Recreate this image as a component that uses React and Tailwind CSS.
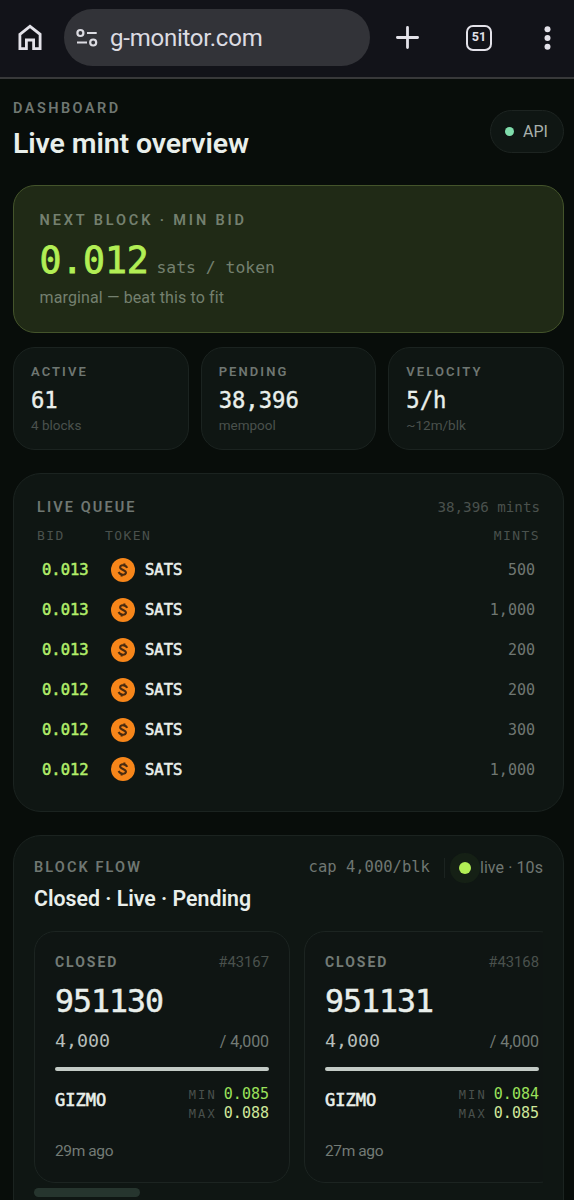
const queue = [
  { bid: "0.013", token: "SATS", mints: "500" },
  { bid: "0.013", token: "SATS", mints: "1,000" },
  { bid: "0.013", token: "SATS", mints: "200" },
  { bid: "0.012", token: "SATS", mints: "200" },
  { bid: "0.012", token: "SATS", mints: "300" },
  { bid: "0.012", token: "SATS", mints: "1,000" },
];

const stats = [
  { label: "ACTIVE", value: "61", note: "4 blocks" },
  { label: "PENDING", value: "38,396", note: "mempool" },
  { label: "VELOCITY", value: "5/h", note: "~12m/blk" },
];

const blocks = [
  { id: "#43167", height: "951130", min: "0.085", max: "0.088", ago: "29m ago" },
  { id: "#43168", height: "951131", min: "0.084", max: "0.085", ago: "27m ago" },
];

function SatsIcon() {
  return (
    <svg className="w-6 h-6 shrink-0" viewBox="0 0 24 24" fill="none">
      <circle cx="12" cy="12" r="12" fill="#f7861a" />
      <g transform="rotate(14 12 12)" stroke="#4a2b10" strokeWidth="2.1">
        <path d="M15.5 8.9C14.8 7.8 13.5 7.4 12 7.4c-2.1 0-3.5.8-3.5 2.3 0 3.1 7.1 1.5 7.1 4.6 0 1.5-1.5 2.3-3.6 2.3-1.7 0-3-.5-3.8-1.6" />
        <path d="M12 5.2v2.4M12 16.4v2.4" />
      </g>
    </svg>
  );
}

function BrowserBar() {
  return (
    <div className="h-[79px] border-b-2 border-[#38393a] bg-[#121319] flex items-start pt-[9px]">
      <div className="w-[64px] h-[57px] pl-[18px] flex items-center">
        <svg
          className="w-6 h-[27px]"
          viewBox="0 0 24 27"
          fill="none"
          stroke="#e3e2e9"
          strokeWidth="2.8"
        >
          <path d="M1.9 10.3 12 2.4l10.1 7.9v14.3h-6.5V16H8.4v8.6H1.9z" />
        </svg>
      </div>
      <div className="w-[306px] h-[57px] rounded-full bg-[#323338] flex items-center pl-[12px]">
        <svg
          className="w-[22px] h-[20px]"
          viewBox="0 0 22 20"
          fill="none"
          stroke="#dcdce2"
          strokeWidth="2.2"
        >
          <circle cx="4.4" cy="5" r="3" />
          <path d="M11 5h9.7M1 14.5h10" />
          <circle cx="17.2" cy="14.5" r="3" />
        </svg>
        <span className="ml-[12px] font-[Roboto] text-[24px] leading-none tracking-[-0.01em] text-[#dcdce2]">
          g-monitor.com
        </span>
      </div>
      <div className="h-[57px] flex-1 flex items-center justify-between pl-[26px] pr-[23px]">
        <svg
          className="w-[23px] h-[23px]"
          viewBox="0 0 23 23"
          stroke="#e3e2e9"
          strokeWidth="2.8"
          strokeLinecap="round"
        >
          <path d="M11.5 1.4v20.2M1.4 11.5h20.2" />
        </svg>
        <div className="w-[26px] h-[26px] rounded-[7px] border-[2.6px] border-[#e3e2e9] flex items-center justify-center font-[Roboto] font-bold text-[12.5px] leading-none text-[#e3e2e9]">
          51
        </div>
        <svg className="w-[7px] h-6 ml-[5px]" viewBox="0 0 7 24" fill="#e3e2e9">
          <circle cx="3.5" cy="3.2" r="3" />
          <circle cx="3.5" cy="12" r="3" />
          <circle cx="3.5" cy="20.8" r="3" />
        </svg>
      </div>
    </div>
  );
}

function BlockCard({ block }) {
  return (
    <div className="w-[256px] h-[252px] shrink-0 rounded-[21px] border border-[#1c2421] bg-[#0f1513] px-[20px] pt-[19px]">
      <div className="h-[22px] flex items-center justify-between">
        <span className="font-bold text-[14px] tracking-[0.14em] text-[#737b76]">CLOSED</span>
        <span className="text-[14.8px] text-[#4a514d]">{block.id}</span>
      </div>
      <div className="mt-px h-[56px] flex items-center font-['DejaVu_Sans_Mono',monospace] text-[31.5px] tracking-[-0.03em] text-[#e9efeb] [-webkit-text-stroke:0.5px_#e9efeb]">
        {block.height}
      </div>
      <div className="-mt-px h-[24px] flex items-center justify-between">
        <span className="font-['DejaVu_Sans_Mono',monospace] text-[18.3px] text-[#b6bdb9]">
          4,000
        </span>
        <span className="mt-[2px] text-[16px] tracking-[-0.005em] text-[#737b76]">/ 4,000</span>
      </div>
      <div className="mt-[14px] h-[4px] rounded-full bg-[#c3cbc6]"></div>
      <div className="mt-[14px] h-[38px] flex items-center justify-between">
        <span className="-mt-[6px] font-['DejaVu_Sans_Mono',monospace] text-[17px] text-[#e9efeb] [-webkit-text-stroke:0.6px_#e9efeb]">
          GIZMO
        </span>
        <div className="font-['DejaVu_Sans_Mono',monospace] text-[15px]">
          <div className="h-[19px] flex items-center justify-end">
            <span className="text-[12px] tracking-[0.18em] text-[#4a514d] mr-[7px]">MIN</span>
            <span className="text-[#9be15a]">{block.min}</span>
          </div>
          <div className="h-[19px] flex items-center justify-end">
            <span className="text-[12px] tracking-[0.18em] text-[#4a514d] mr-[7px]">MAX</span>
            <span className="text-[#cfe79a]">{block.max}</span>
          </div>
        </div>
      </div>
      <div className="mt-[17px] h-[24px] flex items-center text-[15.5px] tracking-[-0.025em] text-[#737b76]">
        {block.ago}
      </div>
    </div>
  );
}

export default function App() {
  return (
    <div className="w-full h-[1200px] overflow-hidden bg-[#080d0a] font-[Roboto,sans-serif] whitespace-nowrap">
      <BrowserBar />

      <main className="pl-[13px] pr-[10px]">
        <header className="h-[106px] flex justify-between">
          <div className="pt-[20px]">
            <div className="h-[20px] flex items-center font-semibold text-[14.5px] tracking-[0.17em] text-[#6f7772]">
              DASHBOARD
            </div>
            <h1 className="h-[50px] flex items-center font-semibold text-[28.5px] tracking-[-0.004em] text-[#e9efeb]">
              Live mint overview
            </h1>
          </div>
          <div className="mt-[31px] w-[74px] h-[43px] rounded-full border border-[#1d2421] bg-[#0f1613] flex items-center pl-[14px] text-[16px] text-[#a9b1ac]">
            <span className="w-[9px] h-[9px] rounded-full bg-[#7fdcab] mr-[9px]"></span>
            API
          </div>
        </header>

        {/* Next block */}
        <section className="h-[148px] rounded-[22px] border border-[#44542b] bg-[#202a16] pl-[25.5px] pt-[23px]">
          <div className="h-[24px] flex items-center font-semibold text-[14.5px] tracking-[0.198em] text-[#74806f]">
            NEXT BLOCK · MIN BID
          </div>
          <div className="h-[54px] flex items-center font-['DejaVu_Sans_Mono',monospace]">
            <span className="mt-[2px] text-[36.5px] tracking-[-0.005em] text-[#b2ee55] [-webkit-text-stroke:0.8px_#b2ee55]">
              0.012
            </span>
            <span className="ml-[8px] mt-[16px] text-[16.4px] text-[#74806f]">sats / token</span>
          </div>
          <div className="-mt-[1px] h-[24px] flex items-center text-[16px] tracking-[0.008em] text-[#74806f]">
            marginal — beat this to fit
          </div>
        </section>

        {/* Stats */}
        <section className="mt-[14px] grid grid-cols-3 gap-[12px]">
          {stats.map((stat) => (
            <div
              key={stat.label}
              className="h-[103px] rounded-[22px] border border-[#1b2320] bg-[#0f1613] pl-[17px] pt-[13px]"
            >
              <div className="h-[22px] flex items-center font-semibold text-[13px] tracking-[0.16em] text-[#6f7772]">
                {stat.label}
              </div>
              <div className="h-[36px] flex items-center font-['DejaVu_Sans_Mono',monospace] text-[22.2px] text-[#e9efeb] [-webkit-text-stroke:0.4px_#e9efeb]">
                {stat.value}
              </div>
              <div className="-mt-[5px] h-[22px] flex items-center text-[13.5px] text-[#4a514d]">
                {stat.note}
              </div>
            </div>
          ))}
        </section>

        {/* Live queue */}
        <section className="mt-[23px] h-[339px] rounded-[28px] border border-[#1b2320] bg-[#0f1613] px-[23px] pt-[22px]">
          <div className="h-[24px] flex items-center justify-between">
            <span className="font-semibold text-[14.5px] tracking-[0.145em] text-[#6f7772]">
              LIVE QUEUE
            </span>
            <span className="font-['DejaVu_Sans_Mono',monospace] text-[14.2px] text-[#4a514d]">
              38,396 mints
            </span>
          </div>
          <div className="mt-[4px] h-[24px] flex items-center font-['DejaVu_Sans_Mono',monospace] text-[13px] tracking-[0.11em] text-[#4a514d]">
            <span className="w-[68px]">BID</span>
            <span>TOKEN</span>
            <span className="ml-auto">MINTS</span>
          </div>
          <div className="mt-[2px] px-[5px]">
            {queue.map((row, index) => (
              <div
                key={index}
                className="h-[39.9px] flex items-center font-['DejaVu_Sans_Mono',monospace] text-[15.5px]"
              >
                <span className="w-[69px] mt-[2px] text-[#b2ee6a] [-webkit-text-stroke:0.5px_#b2ee6a]">
                  {row.bid}
                </span>
                <SatsIcon />
                <span className="ml-[10px] mt-[2px] text-[#e9efeb] [-webkit-text-stroke:0.6px_#e9efeb]">
                  {row.token}
                </span>
                <span className="ml-auto mt-px text-[15px] text-[#6f7772]">{row.mints}</span>
              </div>
            ))}
          </div>
        </section>

        {/* Block flow */}
        <section className="mt-[23px] h-[400px] rounded-[28px] border border-[#1b2320] bg-[#0f1613] px-[20px] pt-[19px]">
          <div className="h-[26px] flex items-center">
            <span className="font-semibold text-[14.5px] tracking-[0.145em] text-[#6f7772]">
              BLOCK FLOW
            </span>
            <span className="ml-auto font-['DejaVu_Sans_Mono',monospace] text-[15.5px] text-[#6f7772]">
              cap 4,000/blk
            </span>
            <span className="ml-[14px] w-px h-[20px] bg-[#1b2320]"></span>
            <span className="ml-[14px] w-[12px] h-[12px] rounded-full bg-[#b2ee55] shadow-[0_0_0_9px_#152015]"></span>
            <span className="ml-[9px] text-[16px] tracking-[0.005em] text-[#6f7772]">live · 10s</span>
          </div>
          <h2 className="h-[36px] flex items-center font-semibold text-[21.3px] text-[#e9efeb]">
            Closed · Live · Pending
          </h2>
          <div className="mt-[14px] flex gap-[14px] overflow-hidden">
            {blocks.map((block) => (
              <BlockCard key={block.id} block={block} />
            ))}
          </div>
          <div className="mt-[5px] w-[106px] h-[9px] rounded-full bg-[#26352e]"></div>
        </section>
      </main>
    </div>
  );
}
